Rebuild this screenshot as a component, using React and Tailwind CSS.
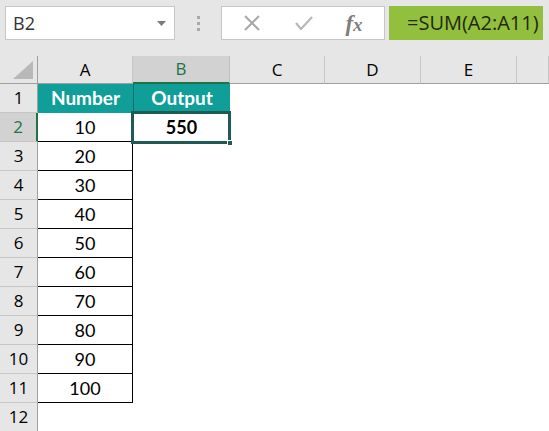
import React from "react";

const cols = ["A", "B", "C", "D", "E", ""];
const values = [10, 20, 30, 40, 50, 60, 70, 80, 90, 100];

const ui = { fontFamily: '"Open Sans", "Noto Sans", sans-serif' };
const cell = { fontFamily: 'Lato, "Open Sans", sans-serif' };

function TopBar() {
  return (
    <div className="flex h-[56px] items-start bg-[#e6e6e6] px-[5px] pt-[6px]">
      {/* name box */}
      <div className="flex h-[34px] w-[170px] items-center justify-between border border-[#c6c6c6] bg-white pl-[7px] pr-[8px]">
        <span className="text-[18px] text-[#333]" style={ui}>
          B2
        </span>
        <svg width="9" height="5" viewBox="0 0 9 5">
          <path d="M0 0h9L4.5 5z" fill="#7a7a7a" />
        </svg>
      </div>
      {/* dots */}
      <div className="flex h-[34px] w-[46px] flex-col items-center justify-center gap-[3px]">
        <span className="h-[3px] w-[3px] bg-[#a8a8a8]" />
        <span className="h-[3px] w-[3px] bg-[#a8a8a8]" />
        <span className="h-[3px] w-[3px] bg-[#a8a8a8]" />
      </div>
      {/* formula buttons */}
      <div className="flex h-[34px] w-[164px] items-center border border-[#c6c6c6] bg-white">
        <div className="flex w-[58px] justify-center pl-[2px]">
          <svg width="16" height="16" viewBox="0 0 16 16">
            <path d="M1 1L15 15M15 1L1 15" stroke="#a8a8a8" strokeWidth="2" />
          </svg>
        </div>
        <div className="flex w-[48px] justify-center">
          <svg width="18" height="14" viewBox="0 0 18 14">
            <path d="M1 7l5 6L17 1" stroke="#b8b8b8" strokeWidth="2.2" fill="none" />
          </svg>
        </div>
        <div className="flex w-[52px] justify-center">
          <span
            className="text-[23px] font-bold italic leading-none text-[#7f7f7f]"
            style={{ fontFamily: '"Liberation Serif", serif' }}
          >
            f<span className="text-[19px]">x</span>
          </span>
        </div>
      </div>
      {/* formula */}
      <div className="ml-[4px] flex h-[34px] w-[154px] items-center bg-[#93bf3e] pl-[18px]">
        <span className="text-[20px] text-[#1f2a0c]" style={ui}>
          =SUM(A2:A11)
        </span>
      </div>
    </div>
  );
}

function ColHeader({ label, active }) {
  return (
    <div
      className={`flex h-[28px] items-center justify-center border-r text-[17px] ${
        active
          ? "border-[#c0c0c0] border-b-2 border-b-[#217346] bg-[#d2d2d2] text-[#217346]"
          : "border-[#c6c6c6] border-b border-b-[#9f9f9f] bg-[#e6e6e6] text-black"
      }`}
      style={ui}
    >
      {label}
    </div>
  );
}

function RowHeader({ n, active }) {
  return (
    <div
      className={`flex h-[29px] items-center justify-center border-b border-[#c6c6c6] text-[17px] ${
        active
          ? "border-r-2 border-r-[#217346] bg-[#d2d2d2] text-[#217346]"
          : "border-r border-r-[#9f9f9f] bg-[#e6e6e6] text-black"
      }`}
      style={ui}
    >
      {n}
    </div>
  );
}

export default function App() {
  const rows = [];
  for (let r = 1; r <= 12; r++) {
    rows.push(<RowHeader key={"h" + r} n={r} active={r === 2} />);
    // column A
    if (r === 1) {
      rows.push(
        <div
          key={"a" + r}
          className="flex h-[29px] items-center justify-center bg-[#0f9e98] text-[19px] font-bold text-white"
          style={cell}
        >
          Number
        </div>
      );
    } else if (r <= 11) {
      rows.push(
        <div
          key={"a" + r}
          className="flex h-[29px] items-center justify-center border-b border-r border-black bg-white text-[18px] text-black"
          style={cell}
        >
          {values[r - 2]}
        </div>
      );
    } else {
      rows.push(<div key={"a" + r} className="h-[29px] bg-white" />);
    }
    // column B
    if (r === 1) {
      rows.push(
        <div
          key={"b" + r}
          className="flex h-[29px] items-center justify-center border-l border-[#0b6f6a] bg-[#0f9e98] text-[19px] font-bold text-white"
          style={cell}
        >
          Output
        </div>
      );
    } else if (r === 2) {
      rows.push(
        <div
          key={"b" + r}
          className="relative flex h-[29px] items-center justify-center bg-white text-[18px] font-bold text-black"
          style={cell}
        >
          550
          <div className="absolute -left-[2px] -right-[1px] -top-[2px] -bottom-[2px] border-[3px] border-[#1f5a54]" />
          <div className="absolute -bottom-[4px] -right-[3px] h-[6px] w-[6px] border border-white bg-[#1f5a54]" />
        </div>
      );
    } else {
      rows.push(<div key={"b" + r} className="h-[29px] bg-white" />);
    }
    for (let c = 0; c < 4; c++) {
      rows.push(<div key={"x" + r + c} className="h-[29px] bg-white" />);
    }
  }

  return (
    <div className="h-[431px] w-[549px] overflow-hidden bg-white">
      <TopBar />
      <div className="grid grid-cols-[38px_95px_97px_95px_96px_96px_1fr]">
        <div className="flex h-[28px] items-end justify-end border-b border-r border-[#9f9f9f] bg-[#e6e6e6] pb-[4px] pr-[4px]">
          <svg width="20" height="18" viewBox="0 0 20 18">
            <path d="M20 0V18H0z" fill="#b8b8b8" />
          </svg>
        </div>
        {cols.map((c, i) => (
          <ColHeader key={i} label={c} active={c === "B"} />
        ))}
        {rows}
      </div>
    </div>
  );
}
